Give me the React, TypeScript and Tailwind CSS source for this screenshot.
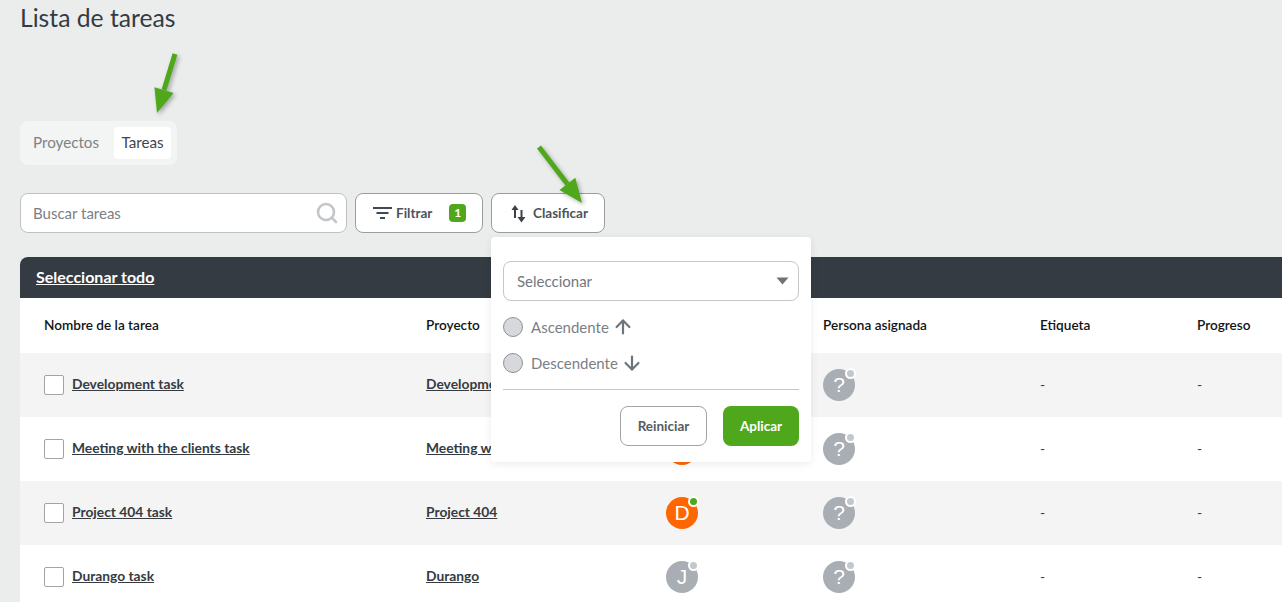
import { ArrowDown, ArrowUp, Search } from "lucide-react"

const font = "font-['Lato','Noto_Sans',sans-serif]"

const rows = [
  { task: "Development task", project: "Development", initial: "D", online: true, bg: "bg-[#f4f4f4]" },
  { task: "Meeting with the clients task", project: "Meeting with clients", initial: "D", online: true, bg: "bg-white" },
  { task: "Project 404 task", project: "Project 404", initial: "D", online: true, bg: "bg-[#f4f4f4]" },
  { task: "Durango task", project: "Durango", initial: "J", online: false, bg: "bg-white" },
]

const gridCols = "grid grid-cols-[382px_240px_157px_217px_157px_1fr] items-center pl-6"

const Avatar = ({ text, orange, online }: { text: string; orange?: boolean; online?: boolean }) => (
  <div className={`relative flex h-8 w-8 items-center justify-center rounded-full text-[21px] text-white font-['Liberation_Sans',sans-serif] ${orange ? "bg-[#ff6600]" : "bg-[#a9aeb5]"}`}>
    {text}
    <span className="absolute -right-px -top-px flex h-[11px] w-[11px] items-center justify-center rounded-full bg-white">
      <span className={`h-[7px] w-[7px] rounded-full ${online ? "bg-[#4fa81b]" : "bg-[#c4c7cb]"}`} />
    </span>
  </div>
)

const GreenArrow = ({ x1, y1, x2, y2 }: { x1: number; y1: number; x2: number; y2: number }) => {
  const angle = Math.atan2(y2 - y1, x2 - x1)
  const head = 24
  const baseX = x2 - Math.cos(angle) * head
  const baseY = y2 - Math.sin(angle) * head
  const nx = -Math.sin(angle) * 10
  const ny = Math.cos(angle) * 10
  return (
    <g>
      <line x1={x1} y1={y1} x2={baseX} y2={baseY} stroke="#4fa81b" strokeWidth="5" />
      <polygon points={`${x2},${y2} ${baseX + nx},${baseY + ny} ${baseX - nx},${baseY - ny}`} fill="#4fa81b" />
    </g>
  )
}

const SortPopover = () => (
  <div className="absolute left-0 top-11 z-10 w-80 rounded-sm bg-white px-3 pb-4 pt-6 shadow-[0_2px_8px_rgba(0,0,0,0.08)]">
    <div className="flex h-10 items-center justify-between rounded-lg border border-[#c4c6c8] pl-[13px] pr-[9px] text-[15px] text-[#73787e]">
      <span>Seleccionar</span>
      <svg width="13" height="8" viewBox="0 0 13 8"><path d="M0.5 0.5H12.5L6.5 7.5Z" fill="#6d7277" /></svg>
    </div>
    <div className="mt-4 flex h-5 items-center gap-2 text-[15px] text-[#7b8085]">
      <span className="h-5 w-5 rounded-full border border-[#8d9196] bg-[#d6d8db]" />
      <span>Ascendente</span>
      <ArrowUp size={22} strokeWidth={2.4} className="-ml-[5px] text-[#6f7479]" />
    </div>
    <div className="mt-4 flex h-5 items-center gap-2 text-[15px] text-[#7b8085]">
      <span className="h-5 w-5 rounded-full border border-[#8d9196] bg-[#d6d8db]" />
      <span>Descendente</span>
      <ArrowDown size={22} strokeWidth={2.4} className="-ml-[5px] text-[#6f7479]" />
    </div>
    <div className="mt-4 border-t border-[#c4c6c8]" />
    <div className="mt-4 flex justify-end gap-4">
      <button className="h-10 w-[87px] rounded-lg border border-[#a0a3a7] text-[13.5px] font-bold text-[#565c63]">Reiniciar</button>
      <button className="h-10 w-[76px] rounded-lg bg-[#4fa81b] text-[13.5px] font-bold text-white">Aplicar</button>
    </div>
  </div>
)

const App = () => {
  return (
    <div className={`relative h-[602px] w-[1282px] overflow-hidden bg-[#ebeded] pl-5 ${font}`}>
      <h1 className="h-[36px] text-[24.7px] leading-[36px] text-[#343b42]">Lista de tareas</h1>

      <div className="mt-[85px] flex h-11 w-[157px] items-center justify-between rounded-lg bg-[#f3f4f4] pl-[13px] pr-[6px] text-[15.2px]">
        <span className="pb-0.5 text-[#7e8287]">Proyectos</span>
        <span className="flex h-8 w-[57px] items-center justify-center rounded bg-white pb-0.5 text-[#3f454b]">Tareas</span>
      </div>

      <div className="mt-7 flex gap-2">
        <div className="flex h-10 w-[327px] items-center justify-between rounded-lg border border-[#bfc1c3] bg-white pl-3 pr-[7px] text-[15px] text-[#7b8085]">
          <span>Buscar tareas</span>
          <Search size={24} strokeWidth={2.6} className="text-[#c3c6c9]" />
        </div>
        <button className="flex h-10 w-32 items-center rounded-lg border border-[#9a9da1] bg-white pl-[17px] text-[13.5px] font-bold text-[#4c535a]">
          <svg width="19" height="12" viewBox="0 0 19 12" className="mr-1">
            <path d="M0 1H19M3.5 6H15.5M7 11H12" stroke="#41484f" strokeWidth="2" />
          </svg>
          Filtrar
          <span className="ml-[17px] flex h-[18px] w-[17px] items-center justify-center rounded-sm bg-[#4fa81b] text-xs text-white">1</span>
        </button>
        <div className="relative">
          <button className="flex h-10 w-[114px] items-center rounded-lg border border-[#9a9da1] bg-white pl-[19px] text-[13.5px] font-bold text-[#4c535a]">
            <svg width="15" height="20" viewBox="0 0 15 20" className="mr-[7px]">
              <path d="M4 15V6" stroke="#3a4148" strokeWidth="2" />
              <path d="M4 2L7.5 7H0.5Z" fill="#3a4148" />
              <path d="M10.5 7V15" stroke="#3a4148" strokeWidth="2" />
              <path d="M10.5 19.5L14.5 14H6.5Z" fill="#3a4148" />
            </svg>
            Clasificar
          </button>
          <SortPopover />
        </div>
      </div>

      <div className="mt-6 w-[1262px]">
        <div className="flex h-[41px] items-center rounded-tl-lg bg-[#343b42] pb-0.5 pl-4">
          <span className="text-[16px] font-bold text-white underline">Seleccionar todo</span>
        </div>
        <div className={`${gridCols} h-[55px] bg-white text-[13.6px] font-semibold text-[#111417]`}>
          <span>Nombre de la tarea</span>
          <span>Proyecto</span>
          <span>Creador</span>
          <span>Persona asignada</span>
          <span>Etiqueta</span>
          <span>Progreso</span>
        </div>
        {rows.map((row) => (
          <div key={row.task} className={`${gridCols} h-16 text-[13.8px] text-[#343b42] ${row.bg}`}>
            <div className="flex items-center gap-2">
              <span className="h-5 w-5 rounded-[2px] border border-[#a0a3a7] bg-white" />
              <span className="pb-0.5 font-bold underline">{row.task}</span>
            </div>
            <span className="pb-0.5 font-bold underline">{row.project}</span>
            <Avatar text={row.initial} orange={row.initial === "D"} online={row.online} />
            <Avatar text="?" />
            <span>-</span>
            <span>-</span>
          </div>
        ))}
      </div>

      <svg width="1282" height="602" className="pointer-events-none absolute left-0 top-0 z-20 drop-shadow-[2px_2px_2px_rgba(0,0,0,0.3)]">
        <GreenArrow x1={175} y1={54} x2={157} y2={113} />
        <GreenArrow x1={539} y1={147} x2={582} y2={203} />
      </svg>
    </div>
  )
}

export default App
